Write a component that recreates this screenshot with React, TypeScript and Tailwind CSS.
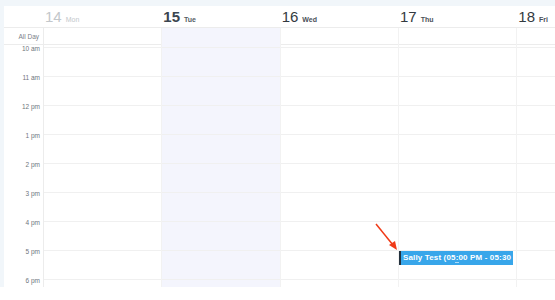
import React from "react";

const days = [
  { n: "14", d: "Mon", past: true },
  { n: "15", d: "Tue", today: true },
  { n: "16", d: "Wed" },
  { n: "17", d: "Thu" },
  { n: "18", d: "Fri" },
];
const hours = ["10 am", "11 am", "12 pm", "1 pm", "2 pm", "3 pm", "4 pm", "5 pm", "6 pm"];

export default function App() {
  return (
    <div className="w-[555px] h-[300px] bg-white overflow-hidden" style={{ fontFamily: '"Liberation Sans", Arial, sans-serif' }}>
      <div className="relative h-[287px] bg-[#f1f6fa] pl-[4px] pt-[6px] overflow-hidden">
        <div className="h-full bg-white flex flex-col overflow-hidden">
          {/* header */}
          <div className="grid grid-cols-[40px_repeat(5,118.33px)] h-[22px] border-b border-[#ececec] shrink-0">
            <div />
            {days.map((d) => (
              <div key={d.n} className="flex items-baseline pl-[1px] pt-[3px] gap-[4px] whitespace-nowrap">
                <span
                  className={
                    "text-[15px] leading-[16px] " +
                    (d.past ? "text-[#c3c7cb]" : d.today ? "font-bold text-[#3b4650]" : "text-[#333a40]")
                  }
                >
                  {d.n}
                </span>
                <span
                  className={
                    "text-[7px] " +
                    (d.past ? "text-[#c3c7cb]" : d.today ? "font-bold text-[#545c64]" : "font-bold text-[#4a5058]")
                  }
                >
                  {d.d}
                </span>
              </div>
            ))}
          </div>
          {/* all day */}
          <div className="grid grid-cols-[40px_repeat(5,118.33px)] h-[17px] border-b border-[#ececec] shrink-0">
            <div className="text-[6.5px] text-[#7a8088] text-right pr-[4px] leading-[17px] border-r border-[#ececec]">All Day</div>
            {days.map((d) => (
              <div key={d.n} className={"border-r border-[#f2f2f2] " + (d.today ? "bg-[#f4f5fd]" : "")} />
            ))}
          </div>
          {/* grid */}
          <div className="grid grid-cols-[40px_repeat(5,118.33px)] flex-1 pt-[2px]">
            <div className="flex flex-col -mt-[3px] border-r border-[#ececec]">
              {hours.map((h) => (
                <div key={h} className="h-[29px] shrink-0 text-[6.5px] leading-[10px] text-[#6f757c] text-right pr-[3px]">
                  {h}
                </div>
              ))}
            </div>
            {days.map((d, di) => (
              <div key={d.n} className={"flex flex-col border-r border-[#f2f2f2] -mt-[2px] pt-[2px] " + (d.today ? "bg-[#f4f5fd]" : "")}>
                {hours.map((h, hi) => (
                  <div key={h} className="h-[29px] shrink-0 border-t border-[#f0f0f0]">
                    {di === 3 && hi === 7 && (
                      <div className="relative h-[14px] w-[114px] bg-[#38a6ea] border-l-[2px] border-[#24323e] pl-[2px] overflow-hidden whitespace-nowrap text-white font-bold text-[8px] tracking-[0.15px] leading-[14px]">
                        Sally Test (05:00 PM - 05:30
                        <div className="absolute left-[54px] bottom-[2px] w-[4px] h-[1px] bg-white/60" />
                      </div>
                    )}
                  </div>
                ))}
              </div>
            ))}
          </div>
        </div>
        <svg className="absolute left-0 top-0" width="555" height="300" viewBox="0 0 555 300">
          <line x1="376" y1="224" x2="393" y2="245" stroke="#f03a17" strokeWidth="1.5" />
          <polygon points="397,250 389,245 395,241" fill="#f03a17" />
        </svg>
      </div>
    </div>
  );
}
